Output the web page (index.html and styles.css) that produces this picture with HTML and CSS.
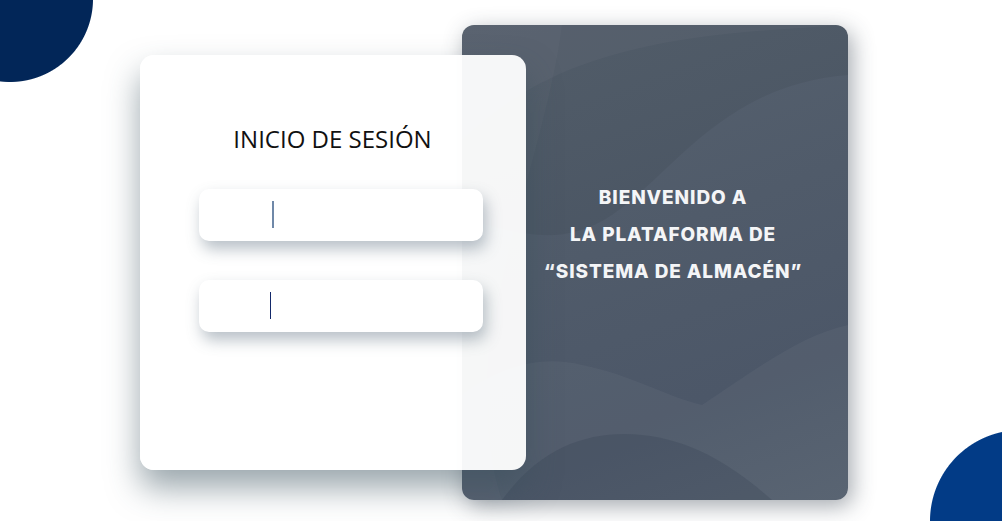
FILE: index.html
```html
<!DOCTYPE html>
<html lang="es">
<head>
<meta charset="UTF-8">
<meta name="viewport" content="width=device-width, initial-scale=1.0">
<title>Inicio de sesión</title>
<link rel="stylesheet" href="styles.css">
</head>
<body>
<div class="stage">
    <div class="welcome">
        <svg class="waves" viewBox="0 0 386 475" preserveAspectRatio="none">
            <path d="M0 115 C60 60 110 40 170 25 C230 10 300 5 386 0 L386 0 L0 0 Z" fill="#ffffff" opacity="0.03"/>
            <path d="M-20 190 C40 200 90 230 150 190 C210 150 260 60 386 50 L386 0 L0 0 Z" fill="#000000" opacity="0.05"/>
            <path d="M0 370 C40 340 80 330 120 340 C170 350 200 370 240 380 C300 340 340 310 386 300 L386 475 L0 475 Z" fill="#ffffff" opacity="0.04"/>
            <path d="M40 475 C80 420 130 405 180 410 C230 415 270 440 310 475 Z" fill="#1c2a3c" opacity="0.16"/>
            <path d="M100 0 C90 80 60 160 30 300 C20 380 25 430 40 475 L0 475 L0 0 Z" fill="#ffffff" opacity="0.025"/>
        </svg>
        <div class="welcome-text">
            <p>BIENVENIDO A</p>
            <p>LA PLATAFORMA DE</p>
            <p>“SISTEMA DE ALMACÉN”</p>
        </div>
    </div>

    <div class="login">
        <h1>INICIO DE SESIÓN</h1>
        <div class="field"><span class="caret caret-light"></span></div>
        <div class="field"><span class="caret caret-dark"></span></div>
    </div>
</div>
</body>
</html>
```

FILE: styles.css
```css
html, body {
    margin: 0;
    padding: 0;
    height: 100%;
    overflow: hidden;
}
body {
    font-family: "Open Sans", Arial, sans-serif;
    background-color: #fff;
    background-image:
        radial-gradient(circle 83px at 10px -1px, #022658 82.5px, transparent 83.5px),
        radial-gradient(circle 91px at 1021px 521px, #023b86 90.5px, transparent 91.5px);
    background-repeat: no-repeat;
}
.stage {
    display: grid;
    width: 708px;
    height: 475px;
    padding: 25px 0 0 140px;
}
.welcome, .login {
    grid-area: 1 / 1;
}
.welcome {
    justify-self: end;
    width: 386px;
    height: 475px;
    border-radius: 12px;
    background: linear-gradient(160deg, #57626f 0%, #505b6a 45%, #4c5768 75%, #535e6d 100%);
    box-shadow: 4px 6px 22px rgba(50, 62, 75, 0.45);
    position: relative;
    overflow: hidden;
}
.waves {
    position: absolute;
    left: 0;
    top: 0;
    width: 100%;
    height: 100%;
}
.welcome-text {
    position: relative;
    padding: 154px 0 0 36px;
    text-align: center;
}
.welcome-text p {
    margin: 0;
    font-family: Inter, Roboto, Arial, sans-serif;
    font-weight: 800;
    font-size: 19px;
    line-height: 37px;
    color: #f4f5f7;
    letter-spacing: 0.9px;
}
.login {
    justify-self: start;
    align-self: start;
    margin-top: 30px;
    width: 386px;
    height: 415px;
    box-sizing: border-box;
    padding: 68px 43px 0 59px;
    border-radius: 14px;
    background-color: rgba(255, 255, 255, 0.95);
    box-shadow: 0 18px 32px rgba(55, 80, 92, 0.5);
    position: relative;
}
.login h1 {
    margin: 0 0 34px -17px;
    text-align: center;
    font-weight: 400;
    font-size: 24px;
    line-height: 32px;
    color: #111;
}
.field {
    height: 52px;
    margin-bottom: 39px;
    border-radius: 10px;
    background-color: #fff;
    box-shadow: 3px 8px 15px rgba(85, 105, 122, 0.42);
    position: relative;
}
.caret {
    position: absolute;
    top: 12px;
    width: 2px;
    height: 27px;
}
.caret-light {
    left: 73px;
    background-color: #6f88a8;
}
.caret-dark {
    left: 71px;
    width: 1px;
    background-color: #13296a;
}
```
